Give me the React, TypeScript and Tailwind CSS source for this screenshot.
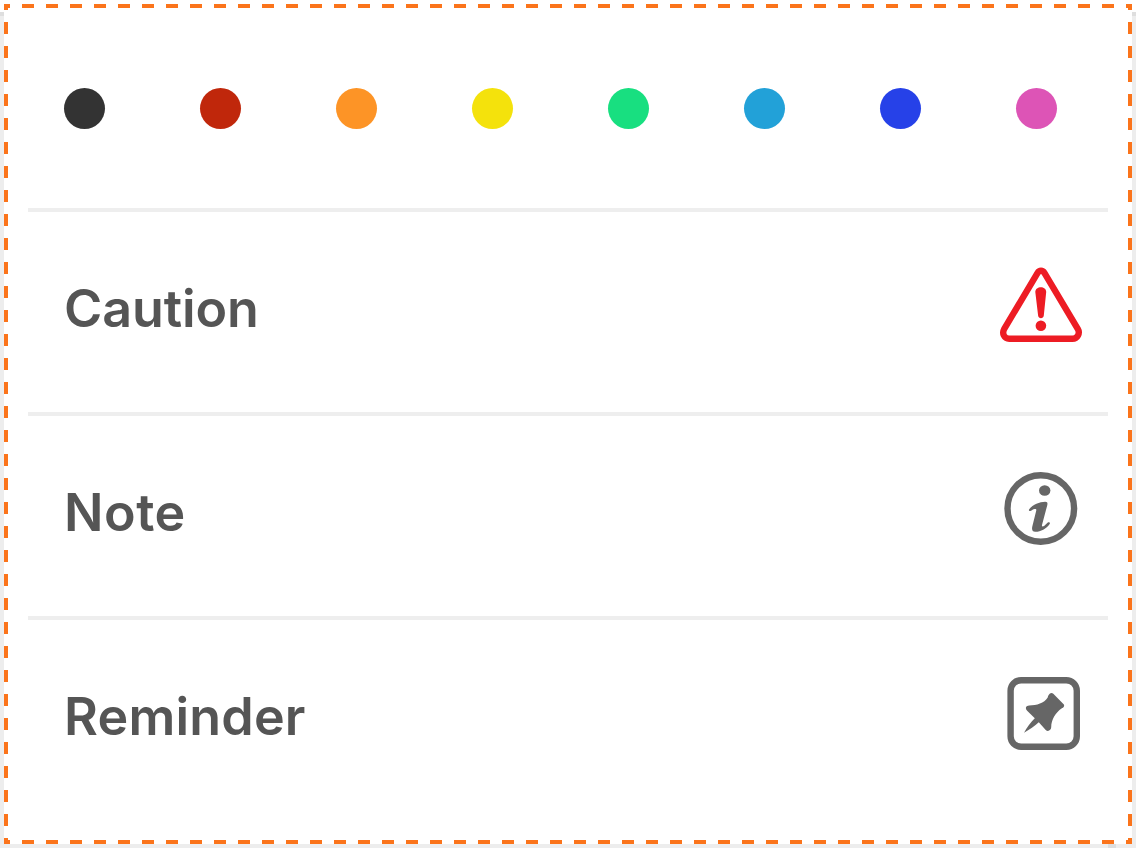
import type { ReactNode } from "react";

interface LabelRowProps {
  label: string;
  tracking: string;
  children: ReactNode;
}

const swatches = [
  { name: "Charcoal", color: "bg-[#333333]" },
  { name: "Red", color: "bg-[#c0270b]" },
  { name: "Orange", color: "bg-[#fd9426]" },
  { name: "Yellow", color: "bg-[#f4e20c]" },
  { name: "Green", color: "bg-[#18df80]" },
  { name: "Sky", color: "bg-[#22a1d8]" },
  { name: "Blue", color: "bg-[#2641e8]" },
  { name: "Pink", color: "bg-[#dd54b6]" },
];

function CautionIcon() {
  return (
    <svg width="100" height="100" viewBox="0 0 100 100" fill="none">
      <path
        d="M47.6 17.8 14.1 74.2C11.9 78.2 14 83.8 19.2 83.8H82.4C87.6 83.8 90.2 78.2 87.9 74.2L54.4 17.8C52.7 15 49.3 15 47.6 17.8Z"
        stroke="#ed1c24"
        strokeWidth="6.4"
        strokeLinejoin="round"
      />
      <path
        d="M45.3 37C45.3 30.6 56.4 30.6 56.2 37L53.8 60.5C53.4 64 48.5 64 48.1 60.5Z"
        fill="#ed1c24"
      />
      <circle cx="50.9" cy="70.8" r="5.3" fill="#ed1c24" />
    </svg>
  );
}

function NoteIcon() {
  return (
    <svg width="100" height="100" viewBox="0 0 100 100" fill="none">
      <circle cx="50.8" cy="48.5" r="33.3" stroke="#666" strokeWidth="6.4" />
      <ellipse cx="54.7" cy="30.5" rx="5.7" ry="5.3" fill="#666" />
      <path
        d="M39.2 49.3C43 44.6 49.5 41.8 55.2 41.8C57.7 41.8 57.7 43.4 57.2 45.4L52 64.9C51.6 66.7 52.7 66.8 54.1 66L57.8 62.5C59.1 61.6 60.5 62.7 59.7 64C56.3 69 50.2 72 45.2 71.8C42.3 71.6 41.6 69.5 42.3 66.4L46.2 50.8C46.6 49.2 45.9 48.7 44.5 49C43.2 49.3 42 50.2 40.4 51C39.3 51.3 38.4 50.3 39.2 49.3Z"
        fill="#666"
      />
    </svg>
  );
}

function ReminderIcon() {
  return (
    <svg width="100" height="100" viewBox="0 0 100 100" fill="none">
      <rect
        x="20.6"
        y="16.2"
        width="66.2"
        height="66.6"
        rx="10.5"
        stroke="#666"
        strokeWidth="6.4"
      />
      <path
        d="M59.7 29.7C60.8 28.7 62.2 28.7 63.3 29.7L73.4 40C75 41.6 74 43.7 71.5 44.4C66 48.3 61.3 54.8 61.2 63.3C61.1 66.4 57.9 68 55.7 66L48.8 58.3C44.8 62 39.5 65.7 34 68.8C37 63 40.6 58.4 44.8 54.2L37.4 47C34.6 44.1 36 41.5 39.1 41.4C47 41.2 54 39.2 57.7 33.4C58.1 31.7 58.8 30.5 59.7 29.7Z"
        fill="#666"
      />
    </svg>
  );
}

function LabelRow({ label, tracking, children }: LabelRowProps) {
  return (
    <div className="flex h-51 justify-between border-t-4 border-[#eeeeee] pr-[18px] pl-9">
      <span
        className={`mt-[62px] text-[52px] leading-[70px] font-semibold text-[#555555] ${tracking}`}
      >
        {label}
      </span>
      {children}
    </div>
  );
}

export default function App() {
  return (
    <div className="flex h-[848px] w-[1136px] flex-col bg-white pt-3 font-['Inter',sans-serif]">
      <div className="h-[836px] border-t-4 border-[#dedede] bg-[#ededed] bg-[linear-gradient(#dddddd,#dddddd)] bg-[size:8px_4px] bg-[position:1108px_100%] bg-no-repeat px-1 pb-1">
        <div className="-mt-3 h-[840px] bg-white bg-[linear-gradient(90deg,#fb741b_6px,transparent_6px_18px,#fb741b_18px),linear-gradient(90deg,#fb741b_6px,transparent_6px_18px,#fb741b_18px),linear-gradient(#fb741b_6px,transparent_6px_18px,#fb741b_18px),linear-gradient(#fb741b_6px,transparent_6px_18px,#fb741b_18px)] bg-[position:left_top,left_bottom,left_top,right_top] bg-[size:24px_4px,24px_4px,4px_24px,4px_24px] [background-repeat:repeat-x,repeat-x,repeat-y,repeat-y] px-6">
          <div className="flex h-51 justify-between pt-[84px] pr-[51px] pl-9">
            {swatches.map(({ name, color }) => (
              <button
                key={name}
                aria-label={name}
                className={`size-[41px] rounded-full ${color}`}
              />
            ))}
          </div>

          <LabelRow label="Caution" tracking="tracking-[-0.1px]">
            <div className="mt-[43px]">
              <CautionIcon />
            </div>
          </LabelRow>
          <LabelRow label="Note" tracking="tracking-[0.5px]">
            <div className="mt-11">
              <NoteIcon />
            </div>
          </LabelRow>
          <LabelRow label="Reminder" tracking="tracking-[0.2px]">
            <div className="mt-11">
              <ReminderIcon />
            </div>
          </LabelRow>
        </div>
      </div>
    </div>
  );
}
